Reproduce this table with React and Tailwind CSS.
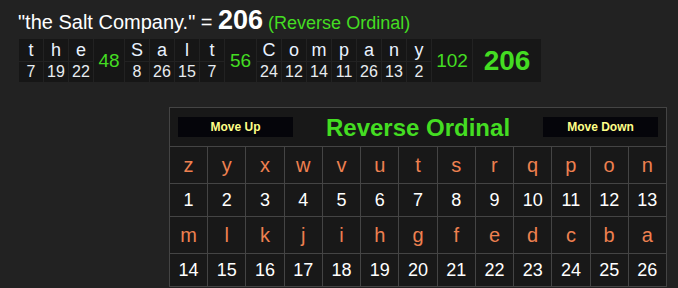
import React from "react";

const words = [
  { letters: ["t", "h", "e"], values: [7, 19, 22], sum: 48, w: "w-[30px]" },
  { letters: ["S", "a", "l", "t"], values: [8, 26, 15, 7], sum: 56, w: "w-[31px]" },
  { letters: ["C", "o", "m", "p", "a", "n", "y"], values: [24, 12, 14, 11, 26, 13, 2], sum: 102, w: "w-[40px]" },
];

const alphabet = "zyxwvutsrqponmlkjihgfedcba".split("");

export default function App() {
  const rows = [alphabet.slice(0, 13), alphabet.slice(13)];
  return (
    <div className="w-[678px] h-[288px] overflow-hidden bg-[#222222] font-['Liberation_Sans',Arial,sans-serif]">
      {/* phrase summary line */}
      <div className="pl-[18px] pt-0 h-[39px] flex items-baseline text-white">
        <span className="text-[20px]">"the Salt Company." =&nbsp;</span>
        <span className="text-[27px] font-bold">206</span>
        <span className="text-[18px] text-[#44dd22] ml-[5px]">(Reverse Ordinal)</span>
      </div>

      {/* letter breakdown strip */}
      <div className="ml-[19px] flex gap-px w-fit">
        {words.map((word, i) => (
          <React.Fragment key={i}>
            {word.letters.map((l, j) => (
              <div key={j} className="flex flex-col gap-px">
                <div className="w-[24px] h-[22px] bg-[#161616] flex items-center justify-center text-[18px] text-[#e8f2ff] leading-none">
                  {l}
                </div>
                <div className="w-[24px] h-[20px] bg-[#161616] flex items-center justify-center text-[16px] text-[#e8ecf0] leading-none">
                  {word.values[j]}
                </div>
              </div>
            ))}
            <div className={`${word.w} h-[43px] bg-[#161616] flex items-center justify-center text-[19px] text-[#44dd22] leading-none`}>
              {word.sum}
            </div>
          </React.Fragment>
        ))}
        <div className="w-[68px] h-[43px] bg-[#171717] flex items-center justify-center text-[28px] font-bold text-[#44dd22] leading-none">
          206
        </div>
      </div>

      {/* cipher chart */}
      <div className="ml-[169px] mt-[25px] w-[498px] bg-[#444444] p-px grid grid-cols-[repeat(13,minmax(0,1fr))] gap-px">
        <div className="col-span-13 h-[38px] bg-[#181818] flex items-center justify-between px-[8px]">
          <button className="w-[115px] h-[20px] bg-[#05050a] text-[#ffff88] text-[12px] font-bold leading-none">
            Move Up
          </button>
          <div className="text-[24px] font-bold text-[#44dd22] leading-none mt-[2px]">Reverse Ordinal</div>
          <button className="w-[115px] h-[20px] bg-[#05050a] text-[#ffff88] text-[12px] font-bold leading-none">
            Move Down
          </button>
        </div>
        {rows.map((row, r) => (
          <React.Fragment key={r}>
            {row.map((ch) => (
              <div key={ch} className="h-[36px] bg-[#181818] flex items-center justify-center text-[20px] text-[#ee8050] leading-none">
                {ch}
              </div>
            ))}
            {row.map((ch, i) => (
              <div key={ch + "n"} className="h-[32px] bg-[#181818] flex items-center justify-center text-[18px] text-white leading-none">
                {r * 13 + i + 1}
              </div>
            ))}
          </React.Fragment>
        ))}
      </div>
    </div>
  );
}
